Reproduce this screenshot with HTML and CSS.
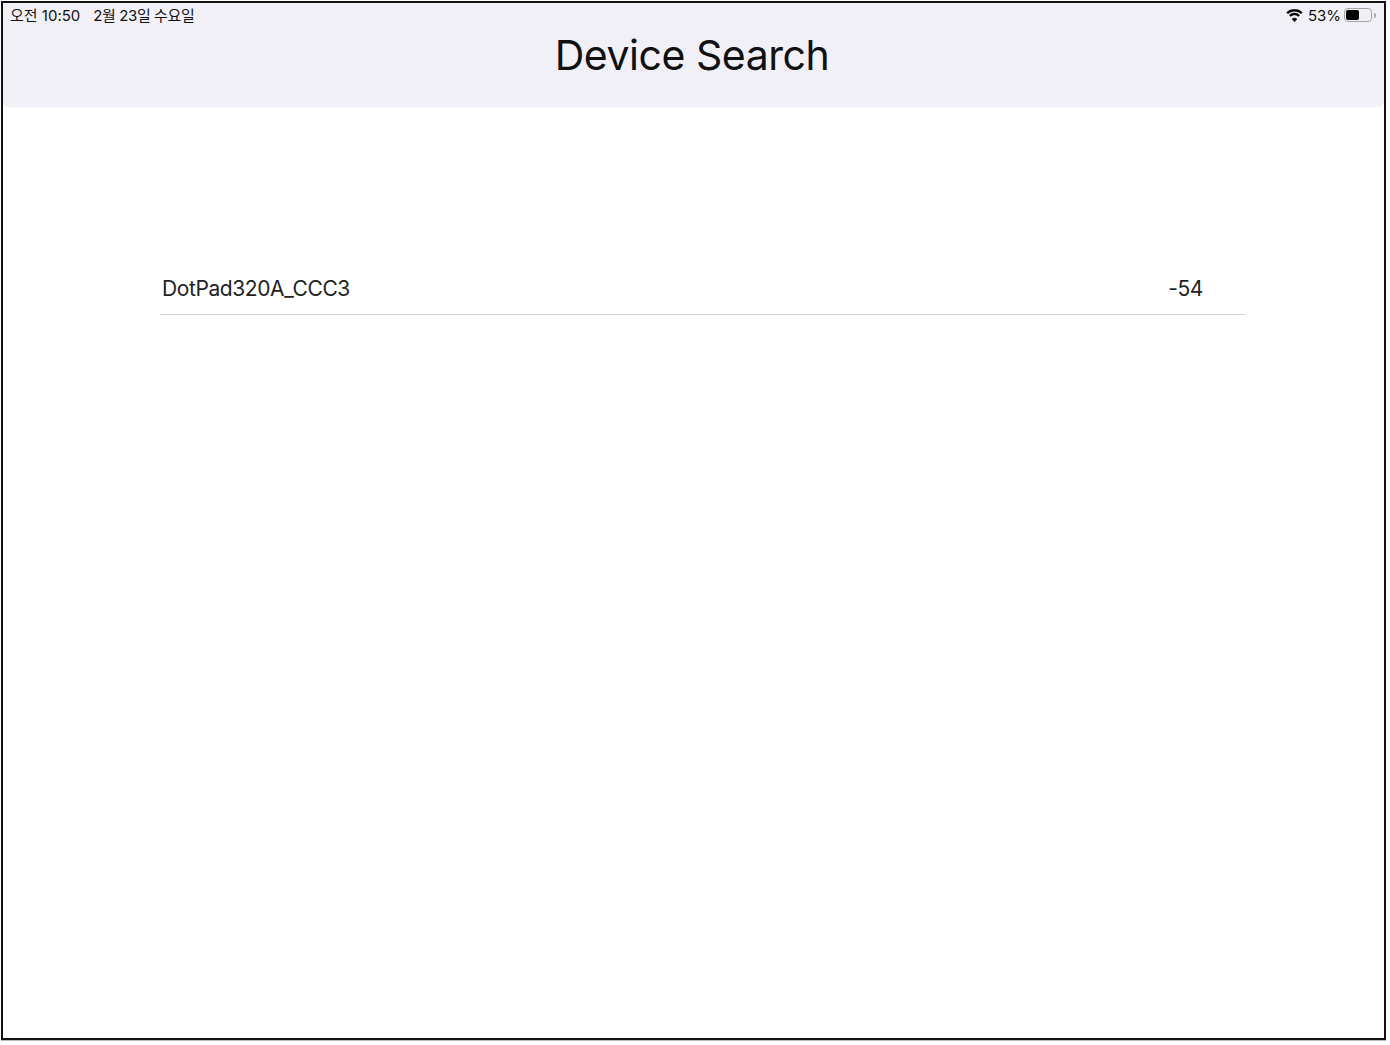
FILE: index.html
```html
<!DOCTYPE html>
<html lang="ko">
<head>
    <meta charset="UTF-8">
    <meta name="viewport" content="width=device-width, initial-scale=1.0">
    <title>Device Search</title>
    <link rel="stylesheet" href="styles.css">
</head>
<body>

    <div class="screen">
        <header class="navbar">
            <div class="statusbar">
                <div class="status-left">
                    <span>오전 10:50</span>
                    <span class="status-date">2월 23일 수요일</span>
                </div>
                <div class="status-right">
                    <svg class="wifi" width="17" height="13" viewBox="0 0 17 13">
                        <path d="M8.5 2.2c2.500 0 4.800 1 6.500 2.600l1.300-1.400C14.200 1.400 11.500.200 8.500.200S2.800 1.400.700 3.400L2 4.800c1.700-1.600 4-2.600 6.500-2.600z"/>
                        <path d="M8.500 6c1.500 0 2.800.600 3.800 1.500l1.300-1.400C12.300 4.800 10.500 4 8.500 4s-3.800.800-5.100 2.100l1.300 1.400C5.700 6.600 7 6 8.500 6z"/>
                        <path d="M8.500 12.800l2.500-2.700c-.6-.6-1.500-1-2.500-1s-1.900.400-2.500 1z"/>
                    </svg>
                    <span>53%</span>
                    <div class="battery"><div class="battery-level"></div></div>
                    <div class="battery-cap"></div>
                </div>
            </div>
            <h1>Device Search</h1>
        </header>

        <div class="device-list">
            <div class="device-row">
                <span>DotPad320A_CCC3</span>
                <span class="rssi">-54</span>
            </div>
        </div>
    </div>

</body>
</html>
```

FILE: styles.css
```css
html, body {
    height: 100%;
}
body {
    margin: 0;
    padding: 1px 4px 5px 1px;
    box-sizing: border-box;
    background: #fff;
    font-family: Inter, "Noto Sans CJK KR", sans-serif;
    color: #111;
}
.screen {
    height: 100%;
    box-sizing: border-box;
    border: 2px solid #111;
    background: #fff;
    box-shadow: 0 1px 0 #bbb;
}
.navbar {
    height: 104px;
    background: #f2f0f7;
    border-radius: 0 0 6px 6px;
}
.statusbar {
    display: flex;
    justify-content: space-between;
    align-items: center;
    height: 22px;
    padding: 0 8px 0 7px;
    font-size: 15px;
}
.status-left {
    display: flex;
    gap: 13px;
}
.status-date {
    letter-spacing: -0.4px;
}
.status-right {
    display: flex;
    align-items: center;
    gap: 3px;
    margin-top: 2px;
}
.wifi {
    fill: #000;
    stroke: #000;
    stroke-width: 0.5;
    margin-right: 2px;
}
.battery {
    width: 28px;
    height: 14px;
    box-sizing: border-box;
    border: 1.5px solid #a5a5a8;
    border-radius: 4px;
    padding: 1px;
}
.battery-level {
    width: 13px;
    height: 100%;
    background: #000;
    border-radius: 2px;
}
.battery-cap {
    width: 2px;
    height: 5px;
    margin-left: -1px;
    background: #aaa;
    border-radius: 0 2px 2px 0;
}
h1 {
    margin: 3px 3px 0 0;
    font-size: 41px;
    font-weight: 400;
    line-height: 54px;
    text-align: center;
    letter-spacing: -0.45px;
}
.device-list {
    margin: 155px 139px 0 157px;
}
.device-row {
    display: flex;
    justify-content: space-between;
    align-items: center;
    height: 52px;
    padding: 0 42px 0 2px;
    border-bottom: 1px solid #d0d0d2;
    font-size: 21px;
    letter-spacing: -0.4px;
    color: #222;
}
```
